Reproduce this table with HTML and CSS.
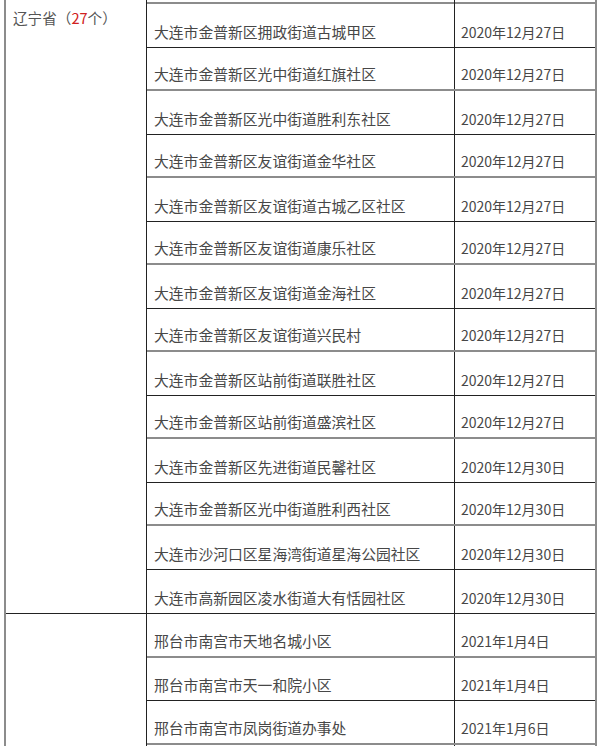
FILE: index.html
```html
<!DOCTYPE html>
<html lang="zh-CN">
<head>
<meta charset="utf-8">
<title>名单</title>
<link rel="stylesheet" href="styles.css">
</head>
<body>
<div class="sheet">
  <div class="group">
    <div class="prov"><span class="prov-text">辽宁省（<span class="num">27</span>个）</span></div>
    <div class="rows">
      <div class="row top gray"><div class="name"></div><div class="date"></div></div>
      <div class="row dark"><div class="name">大连市金普新区拥政街道古城甲区</div><div class="date">2020年12月27日</div></div>
      <div class="row gray"><div class="name">大连市金普新区光中街道红旗社区</div><div class="date">2020年12月27日</div></div>
      <div class="row dark"><div class="name">大连市金普新区光中街道胜利东社区</div><div class="date">2020年12月27日</div></div>
      <div class="row gray"><div class="name">大连市金普新区友谊街道金华社区</div><div class="date">2020年12月27日</div></div>
      <div class="row dark"><div class="name">大连市金普新区友谊街道古城乙区社区</div><div class="date">2020年12月27日</div></div>
      <div class="row gray"><div class="name">大连市金普新区友谊街道康乐社区</div><div class="date">2020年12月27日</div></div>
      <div class="row dark"><div class="name">大连市金普新区友谊街道金海社区</div><div class="date">2020年12月27日</div></div>
      <div class="row gray"><div class="name">大连市金普新区友谊街道兴民村</div><div class="date">2020年12月27日</div></div>
      <div class="row dark"><div class="name">大连市金普新区站前街道联胜社区</div><div class="date">2020年12月27日</div></div>
      <div class="row gray"><div class="name">大连市金普新区站前街道盛滨社区</div><div class="date">2020年12月27日</div></div>
      <div class="row dark"><div class="name">大连市金普新区先进街道民馨社区</div><div class="date">2020年12月30日</div></div>
      <div class="row gray"><div class="name">大连市金普新区光中街道胜利西社区</div><div class="date">2020年12月30日</div></div>
      <div class="row dark"><div class="name">大连市沙河口区星海湾街道星海公园社区</div><div class="date">2020年12月30日</div></div>
      <div class="row last"><div class="name">大连市高新园区凌水街道大有恬园社区</div><div class="date">2020年12月30日</div></div>
    </div>
  </div>
  <div class="group">
    <div class="prov"></div>
    <div class="rows">
      <div class="row gray"><div class="name">邢台市南宫市天地名城小区</div><div class="date">2021年1月4日</div></div>
      <div class="row dark"><div class="name">邢台市南宫市天一和院小区</div><div class="date">2021年1月4日</div></div>
      <div class="row gray"><div class="name">邢台市南宫市凤岗街道办事处</div><div class="date">2021年1月6日</div></div>
      <div class="row dark"><div class="name">&nbsp;</div><div class="date">&nbsp;</div></div>
    </div>
  </div>
</div>
</body>
</html>
```

FILE: styles.css
```css
html, body {
  margin: 0;
  padding: 0;
  background: #fff;
}
body {
  width: 600px;
  height: 746px;
  overflow: hidden;
  font-family: "Noto Sans CJK SC", "Noto Sans", sans-serif;
  font-size: 14px;
  color: #474747;
}
.sheet {
  margin-left: 4px;
  width: 589px;
  border-left: 2px solid #8c8c8c;
  border-right: 2px solid #8c8c8c;
}
.group {
  display: flex;
  border-bottom: 1px solid #222;
}
.group:last-child {
  border-bottom: none;
}
.prov {
  width: 141px;
  flex: none;
  border-right: 1px solid #222;
  padding: 7px 0 0 7px;
  box-sizing: border-box;
  font-size: 14.6px;
}
.prov-text {
  line-height: 20px;
  color: #555;
}
.num {
  color: #d02020;
}
.rows {
  flex: 1;
  display: flex;
  flex-direction: column;
}
.row {
  display: flex;
  height: 43.5px;
  box-sizing: border-box;
}
.row.top {
  height: 4px;
}
.row.gray {
  border-bottom: 2px solid #8c8c8c;
}
.row.dark {
  border-bottom: 1px solid #222;
}
.row.last {
  border-bottom: none;
}
.name, .date {
  display: flex;
  align-items: flex-end;
  padding-bottom: 5px;
  line-height: 20px;
  box-sizing: border-box;
  white-space: nowrap;
}
.name {
  width: 308px;
  flex: none;
  border-right: 1px solid #222;
  padding-left: 7px;
  font-size: 14.8px;
}
.date {
  flex: 1;
  padding-left: 6px;
}
```
